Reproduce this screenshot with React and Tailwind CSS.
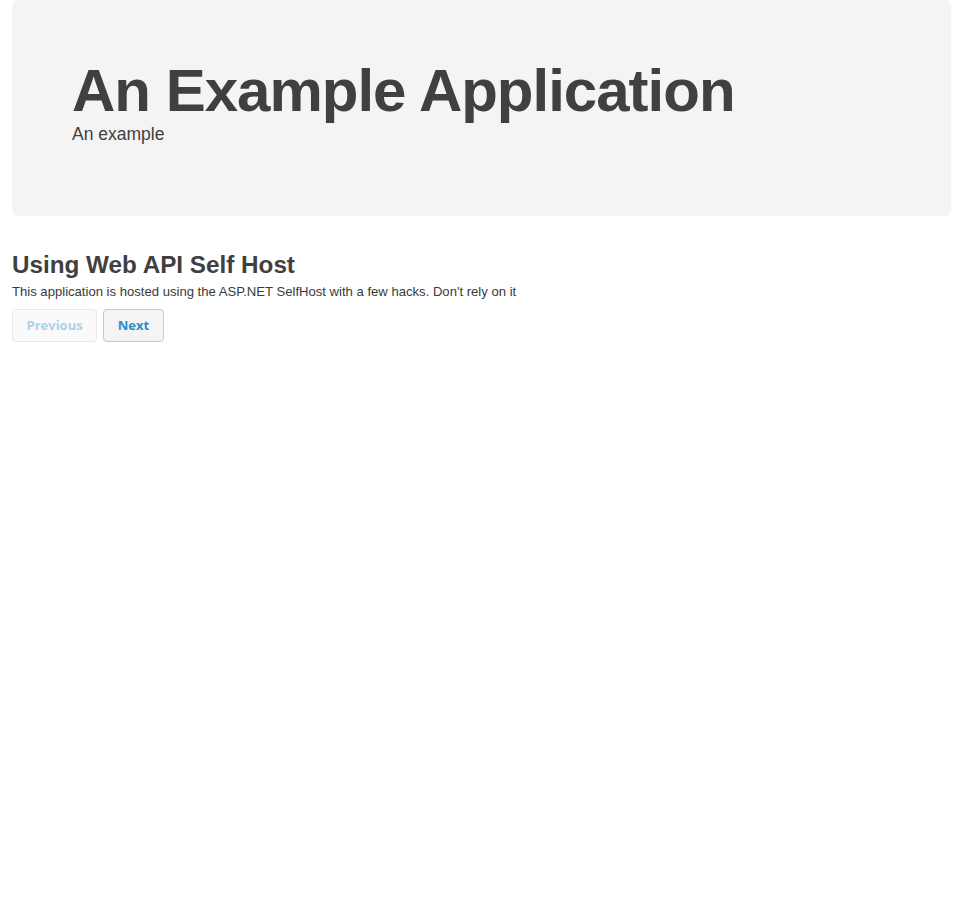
import React from "react";

export default function App() {
  return (
    <div className="min-h-[901px] bg-white px-3 text-[#404040] [font-family:'Liberation_Sans',Arial,sans-serif]">
      <div className="rounded-md bg-[#f4f4f4] pl-[60px] pr-[60px] pt-[61px] pb-[68px]">
        <h1 className="text-[60px] font-bold leading-none tracking-[-1px]">An Example Application</h1>
        <p className="text-[17.5px] leading-[27px]">An example</p>
      </div>
      <h2 className="mt-[36px] text-[24.25px] font-bold leading-[26px]">Using Web API Self Host</h2>
      <p className="mt-[5px] text-[13.1px] leading-[18px] text-[#3a3a3a]">
        This application is hosted using the ASP.NET SelfHost with a few hacks. Don't rely on it
      </p>
      <div className="mt-[8px] flex gap-[6px]">
        <button className="h-[33px] rounded-[4px] border border-[#c8c8c8] bg-[#f4f4f4] px-[13.5px] text-[13px] font-bold text-[#2a8fc4] opacity-40 [font-family:'Open_Sans',sans-serif]">
          Previous
        </button>
        <button className="h-[33px] rounded-[4px] border border-[#c8c8c8] bg-[#f4f4f4] px-[13.5px] text-[13px] font-bold text-[#2a8fc4] [font-family:'Open_Sans',sans-serif]">
          Next
        </button>
      </div>
    </div>
  );
}
